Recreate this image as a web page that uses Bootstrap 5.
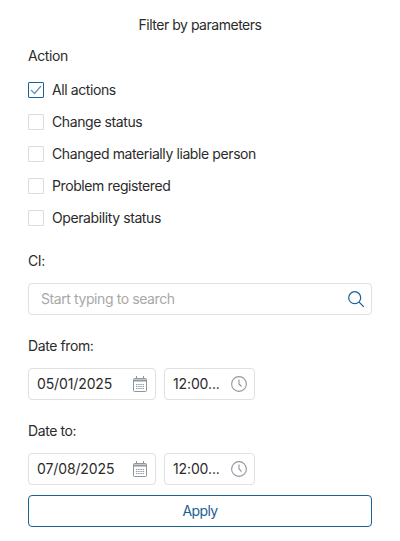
<!DOCTYPE html>
<html lang="en">
<head>
<meta charset="utf-8">
<title>Filter by parameters</title>
<link href="https://cdn.jsdelivr.net/npm/bootstrap@5.3.0/dist/css/bootstrap.min.css" rel="stylesheet">
<style>
html,body{height:100%;background:#fff;}
body{font-family:Inter,"Liberation Sans",sans-serif;font-size:14px;line-height:20px;color:#2b2b2b;letter-spacing:-.4px;overflow:hidden;}
.panel{width:400px;height:541px;padding:15px 28px 0;background:#fff;}
.ttl{text-align:center;margin-bottom:11px;line-height:20px;letter-spacing:-.48px;}
.lbl{line-height:20px;}
.checks{margin-top:14px;gap:12px;margin-bottom:23px;}
.chk{display:flex;align-items:center;gap:8px;height:20px;}
.box{width:16px;height:16px;border:1px solid #dcdcdc;border-radius:1px;flex:none;display:flex;align-items:center;justify-content:center;background:#fff;}
.box.on{border-color:#1b6093;}
.fld{height:32px;border:1px solid #e0e0e0;border-radius:4px;display:flex;align-items:center;background:#fff;}
.srch{margin-top:12px;padding:0 7px 0 12px;justify-content:space-between;color:#a8a8a8;letter-spacing:-.41px;}
.dl{margin-top:21px;margin-bottom:12px;}
.rowd{display:flex;gap:8px;letter-spacing:-.12px;}
.d1{width:128px;padding:0 7px 0 8px;justify-content:space-between;}
.d2{width:91px;padding:0 7px 0 8px;justify-content:space-between;}
.apply{display:block;width:100%;height:32px;margin-top:10px;padding:0;border:1px solid #1b6093;border-radius:4px;background:#fff;color:#1b6093;font-size:14px;line-height:20px;letter-spacing:-.6px;}
.apply:hover{background:#fff;color:#1b6093;border-color:#1b6093;}
</style>
</head>
<body>
<div class="panel">
  <div class="ttl">Filter by parameters</div>
  <div class="lbl">Action</div>
  <div class="d-flex flex-column checks">
    <div class="chk"><span class="box on"><svg width="12" height="10" viewBox="0 0 12 10" fill="none"><path d="M1 5l3.5 3.5L11 1" stroke="#5f93bb" stroke-width="1.2"/></svg></span>All actions</div>
    <div class="chk"><span class="box"></span>Change status</div>
    <div class="chk"><span class="box"></span>Changed materially liable person</div>
    <div class="chk"><span class="box"></span>Problem registered</div>
    <div class="chk"><span class="box"></span>Operability status</div>
  </div>
  <div class="lbl">CI:</div>
  <div class="fld srch"><span>Start typing to search</span>
    <svg width="16" height="16" viewBox="0 0 16 16" fill="none"><circle cx="6.7" cy="6.7" r="6" stroke="#1b6093" stroke-width="1.2"/><path d="M11 11l5 5" stroke="#1b6093" stroke-width="1.2"/></svg></div>
  <div class="lbl dl">Date from:</div>
  <div class="rowd">
    <div class="fld d1"><span>05/01/2025</span>
      <svg width="16" height="16" viewBox="0 0 16 16" fill="none" stroke="#8f979e"><rect x="1.5" y="2.5" width="13" height="13" rx="1"/><path d="M1.5 4.5h13" stroke-width="2"/><path d="M4.5 0v3M11.5 0v3"/><path d="M4 8.5h8M4 10.5h8M4 12.5h8" stroke-dasharray="1.4 .8"/></svg></div>
    <div class="fld d2"><span>12:00...</span>
      <svg width="16" height="16" viewBox="0 0 16 16" fill="none" stroke="#8f979e" stroke-width="1.1"><circle cx="8" cy="8" r="7.4"/><path d="M8 3.5V8l2.5 2.5"/></svg></div>
  </div>
  <div class="lbl dl">Date to:</div>
  <div class="rowd">
    <div class="fld d1"><span>07/08/2025</span>
      <svg width="16" height="16" viewBox="0 0 16 16" fill="none" stroke="#8f979e"><rect x="1.5" y="2.5" width="13" height="13" rx="1"/><path d="M1.5 4.5h13" stroke-width="2"/><path d="M4.5 0v3M11.5 0v3"/><path d="M4 8.5h8M4 10.5h8M4 12.5h8" stroke-dasharray="1.4 .8"/></svg></div>
    <div class="fld d2"><span>12:00...</span>
      <svg width="16" height="16" viewBox="0 0 16 16" fill="none" stroke="#8f979e" stroke-width="1.1"><circle cx="8" cy="8" r="7.4"/><path d="M8 3.5V8l2.5 2.5"/></svg></div>
  </div>
  <button type="button" class="btn apply">Apply</button>
</div>
<script src="https://cdn.jsdelivr.net/npm/bootstrap@5.3.0/dist/js/bootstrap.bundle.min.js"></script>
</body>
</html>
